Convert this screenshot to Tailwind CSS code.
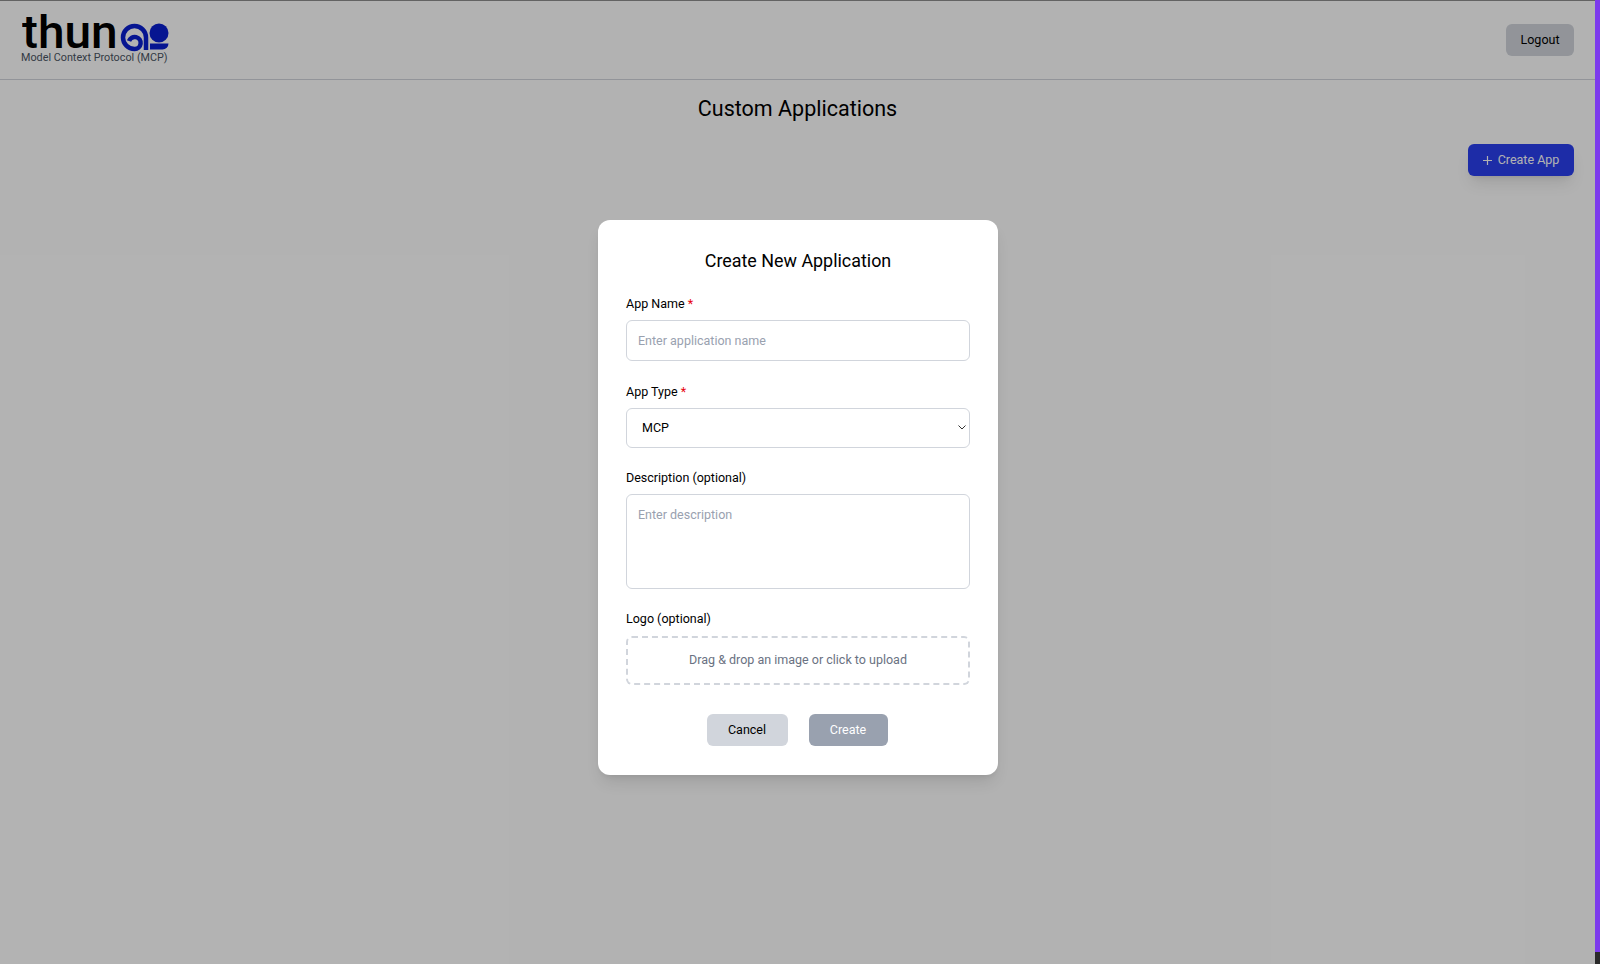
<!DOCTYPE html>
<html><head><meta charset="utf-8"><script src="https://cdn.jsdelivr.net/npm/@tailwindcss/browser@4"></script></head>
<body class="m-0 bg-white">
<div class="relative w-[1600px] h-[964px] overflow-hidden font-['Roboto',sans-serif] bg-white">
  <div class="h-full w-[1595px] bg-white flex flex-col">
    <header class="h-20 shrink-0 border-t border-b border-t-[#8f8f8f] border-b-gray-300 flex items-center justify-between pl-[21px] pr-[21px]">
      <div class="relative w-[150px] h-[50px] mt-[-2px]">
        <span class="absolute left-[1px] top-[1px] text-[46px] leading-[34px] font-medium text-black origin-left scale-x-[1.04]">thun</span>
        <svg class="absolute left-0 top-0" width="150" height="40" viewBox="21 14 150 40" fill="none">
          <path d="M146 50 V37.500 A11.500 11.500 0 1 0 134.500 49 A6 6 0 1 0 129 41" stroke="#0a1fd0" stroke-width="4.500"/>
          <circle cx="159" cy="33" r="9.500" fill="#0a1fd0"/>
          <path d="M150 43.500 H168.500 A6 6 0 0 1 162.500 49.500 H150 Z" fill="#0a1fd0"/>
        </svg>
        <span class="absolute left-0 top-[36px] text-[10.800px] leading-4 text-[#4b5563] whitespace-nowrap">Model Context Protocol (MCP)</span>
      </div>
      <button class="h-8 w-[68px] rounded-md bg-gray-300 text-[12.500px] text-black">Logout</button>
    </header>
    <main class="flex-1 flex flex-col">
      <h1 class="text-center text-[21.500px] leading-8 font-normal text-black mt-[13px]">Custom Applications</h1>
      <div class="flex justify-end pr-[21px] mt-[19px]">
        <button class="h-8 w-[106px] rounded-md bg-[#2a3ff0] text-[12.500px] text-white shadow-lg flex items-center justify-center gap-[6px]">
          <svg width="9" height="9" viewBox="0 0 9 9" fill="none" stroke="currentColor" stroke-width="1.200"><path d="M4.500 0V9M0 4.500H9"/></svg>
          <span>Create App</span>
        </button>
      </div>
    </main>
  </div>
  <div class="absolute inset-0 bg-black/30"></div>
  <div class="absolute right-0 top-0 w-[5px] h-[952px] bg-[#7c3aed]"></div>
  <div class="absolute right-0 top-[952px] w-[5px] h-3 bg-[#2a2a2a]"></div>
  <div class="absolute left-[598px] top-[220px] w-[400px] h-[555px] bg-white rounded-xl shadow-lg px-7 pt-[27px]">
    <h2 class="text-center text-[17.900px] leading-7 text-black">Create New Application</h2>
    <form class="mt-[19px]">
      <label class="block text-[12.500px] leading-5 text-black">App Name <span class="text-red-600">*</span></label>
      <input class="mt-[6px] block w-full h-[41px] rounded-md border border-gray-300 px-[11px] text-[12.500px] placeholder:text-gray-400" placeholder="Enter application name">
      <label class="block mt-[21px] text-[12.500px] leading-5 text-black">App Type <span class="text-red-600">*</span></label>
      <div class="relative mt-[6px]">
        <select class="appearance-none block w-full h-10 rounded-md border border-gray-300 bg-white px-[15px] text-[12.500px] text-black"><option>MCP</option></select>
        <svg class="absolute right-[4px] top-[17px]" width="8" height="5" viewBox="0 0 8 5" fill="none" stroke="#333" stroke-width="1"><path d="M0.500 0.500L4 4L7.500 0.500"/></svg>
      </div>
      <label class="block mt-5 text-[12.500px] leading-5 text-black">Description (optional)</label>
      <textarea class="mt-[6px] block w-full h-[95px] rounded-md border border-gray-300 px-[11px] py-[11px] text-[12.500px] placeholder:text-gray-400 resize-none" placeholder="Enter description"></textarea>
      <label class="block mt-5 text-[12.500px] leading-5 text-black">Logo (optional)</label>
      <div class="mt-[7px] h-[49px] rounded-md border-2 border-dashed border-gray-300 flex items-center justify-center text-[12.500px] text-gray-500">Drag &amp; drop an image or click to upload</div>
      <div class="mt-[29px] flex justify-center gap-[21px] pr-[2px]">
        <button type="button" class="h-8 w-[81px] rounded-md bg-gray-300 text-[12.500px] text-black">Cancel</button>
        <button type="button" class="h-8 w-[79px] rounded-md bg-gray-400 text-[12.500px] text-white">Create</button>
      </div>
    </form>
  </div>
</div>
</body></html>
